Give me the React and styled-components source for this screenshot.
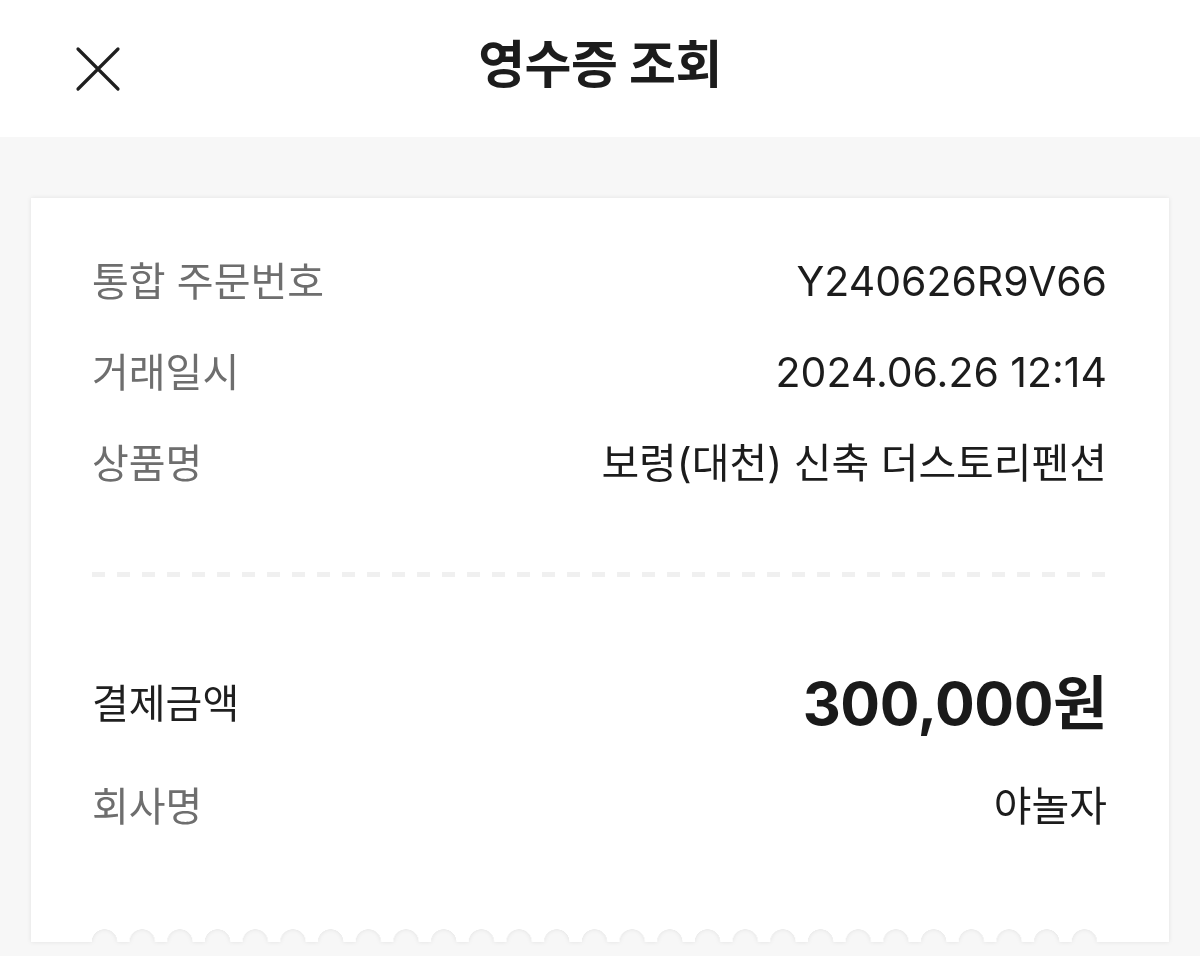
import React from 'react'
import styled, { createGlobalStyle } from 'styled-components'

const GlobalStyle = createGlobalStyle`
  html, body {
    margin: 0;
    padding: 0;
    background: #f7f7f7;
  }
  body {
    font-family: Inter, "Noto Sans CJK KR", sans-serif;
    color: #1c1c1c;
  }
`

const Page = styled.div`
  width: 1200px;
  height: 956px;
  overflow: hidden;
  background: #f7f7f7;
`

const Header = styled.header`
  height: 137px;
  background: #fff;
  display: grid;
  grid-template-columns: 137px 1fr 137px;
  align-items: center;
`

const CloseButton = styled.button`
  border: 0;
  background: none;
  padding: 0;
  margin-left: 72px;
  width: 52px;
  height: 52px;
  display: flex;
  align-items: center;
  justify-content: center;
  cursor: pointer;
`

const Title = styled.h1`
  margin: 0 0 8px;
  text-align: center;
  font-size: 51px;
  line-height: 60px;
  font-weight: 700;
  letter-spacing: -0.5px;
  color: #1c1c1c;
`

const Body = styled.main`
  padding: 61px 31px 0;
`

const Receipt = styled.section`
  filter: drop-shadow(0 0 2px rgba(0, 0, 0, 0.09));
`

const Sheet = styled.div`
  background: #fff;
  padding: 58px 62px 96px 61px;
`

const Group = styled.div`
  display: flex;
  flex-direction: column;
  gap: ${props => props.gap || 40}px;
`

const Row = styled.div`
  display: flex;
  justify-content: space-between;
  align-items: center;
  height: ${props => props.height || 51}px;
  line-height: ${props => props.height || 51}px;
`

const Label = styled.span`
  font-size: 40px;
  color: ${props => (props.strong ? '#1f1f1f' : '#6e6e6e')};
`

const Value = styled.span`
  font-size: 41px;
  color: #1c1c1c;
`

const Amount = styled.span`
  font-size: 59px;
  font-weight: 700;
  color: #1a1a1a;
  letter-spacing: -0.4px;
`

const Dashes = styled.div`
  height: 5px;
  margin: 83px 0 92px;
  background: repeating-linear-gradient(
    to right,
    #f0f0f0 0 13px,
    transparent 13px 25px
  );
`

const Perforation = styled.div`
  height: 14px;
  background:
    linear-gradient(#fff, #fff) left top / 61px 100% no-repeat,
    linear-gradient(#fff, #fff) right top / 72px 100% no-repeat,
    radial-gradient(circle at 12.5px 14px, transparent 12.5px, #fff 13px)
      61px 0 / 37.7px 14px repeat-x;
`

const CloseIcon = () => (
  <svg width="46" height="46" viewBox="0 0 46 46" fill="none">
    <path
      d="M3 3 L43 43 M43 3 L3 43"
      stroke="#1f1f1f"
      strokeWidth="3.2"
      strokeLinecap="round"
    />
  </svg>
)

const details = [
  { label: '통합 주문번호', value: 'Y240626R9V66' },
  { label: '거래일시', value: '2024.06.26 12:14' },
  { label: '상품명', value: '보령(대천) 신축 더스토리펜션' },
]

const App = () => {
  return (
    <Page>
      <GlobalStyle />
      <Header>
        <CloseButton aria-label="닫기">
          <CloseIcon />
        </CloseButton>
        <Title>영수증 조회</Title>
        <div />
      </Header>
      <Body>
        <Receipt>
          <Sheet>
            <Group>
              {details.map(item => (
                <Row key={item.label}>
                  <Label>{item.label}</Label>
                  <Value>{item.value}</Value>
                </Row>
              ))}
            </Group>
            <Dashes />
            <Group gap={42}>
              <Row height={70}>
                <Label strong>결제금액</Label>
                <Amount>300,000원</Amount>
              </Row>
              <Row>
                <Label>회사명</Label>
                <Value>야놀자</Value>
              </Row>
            </Group>
          </Sheet>
          <Perforation />
        </Receipt>
      </Body>
    </Page>
  )
}

export default App
